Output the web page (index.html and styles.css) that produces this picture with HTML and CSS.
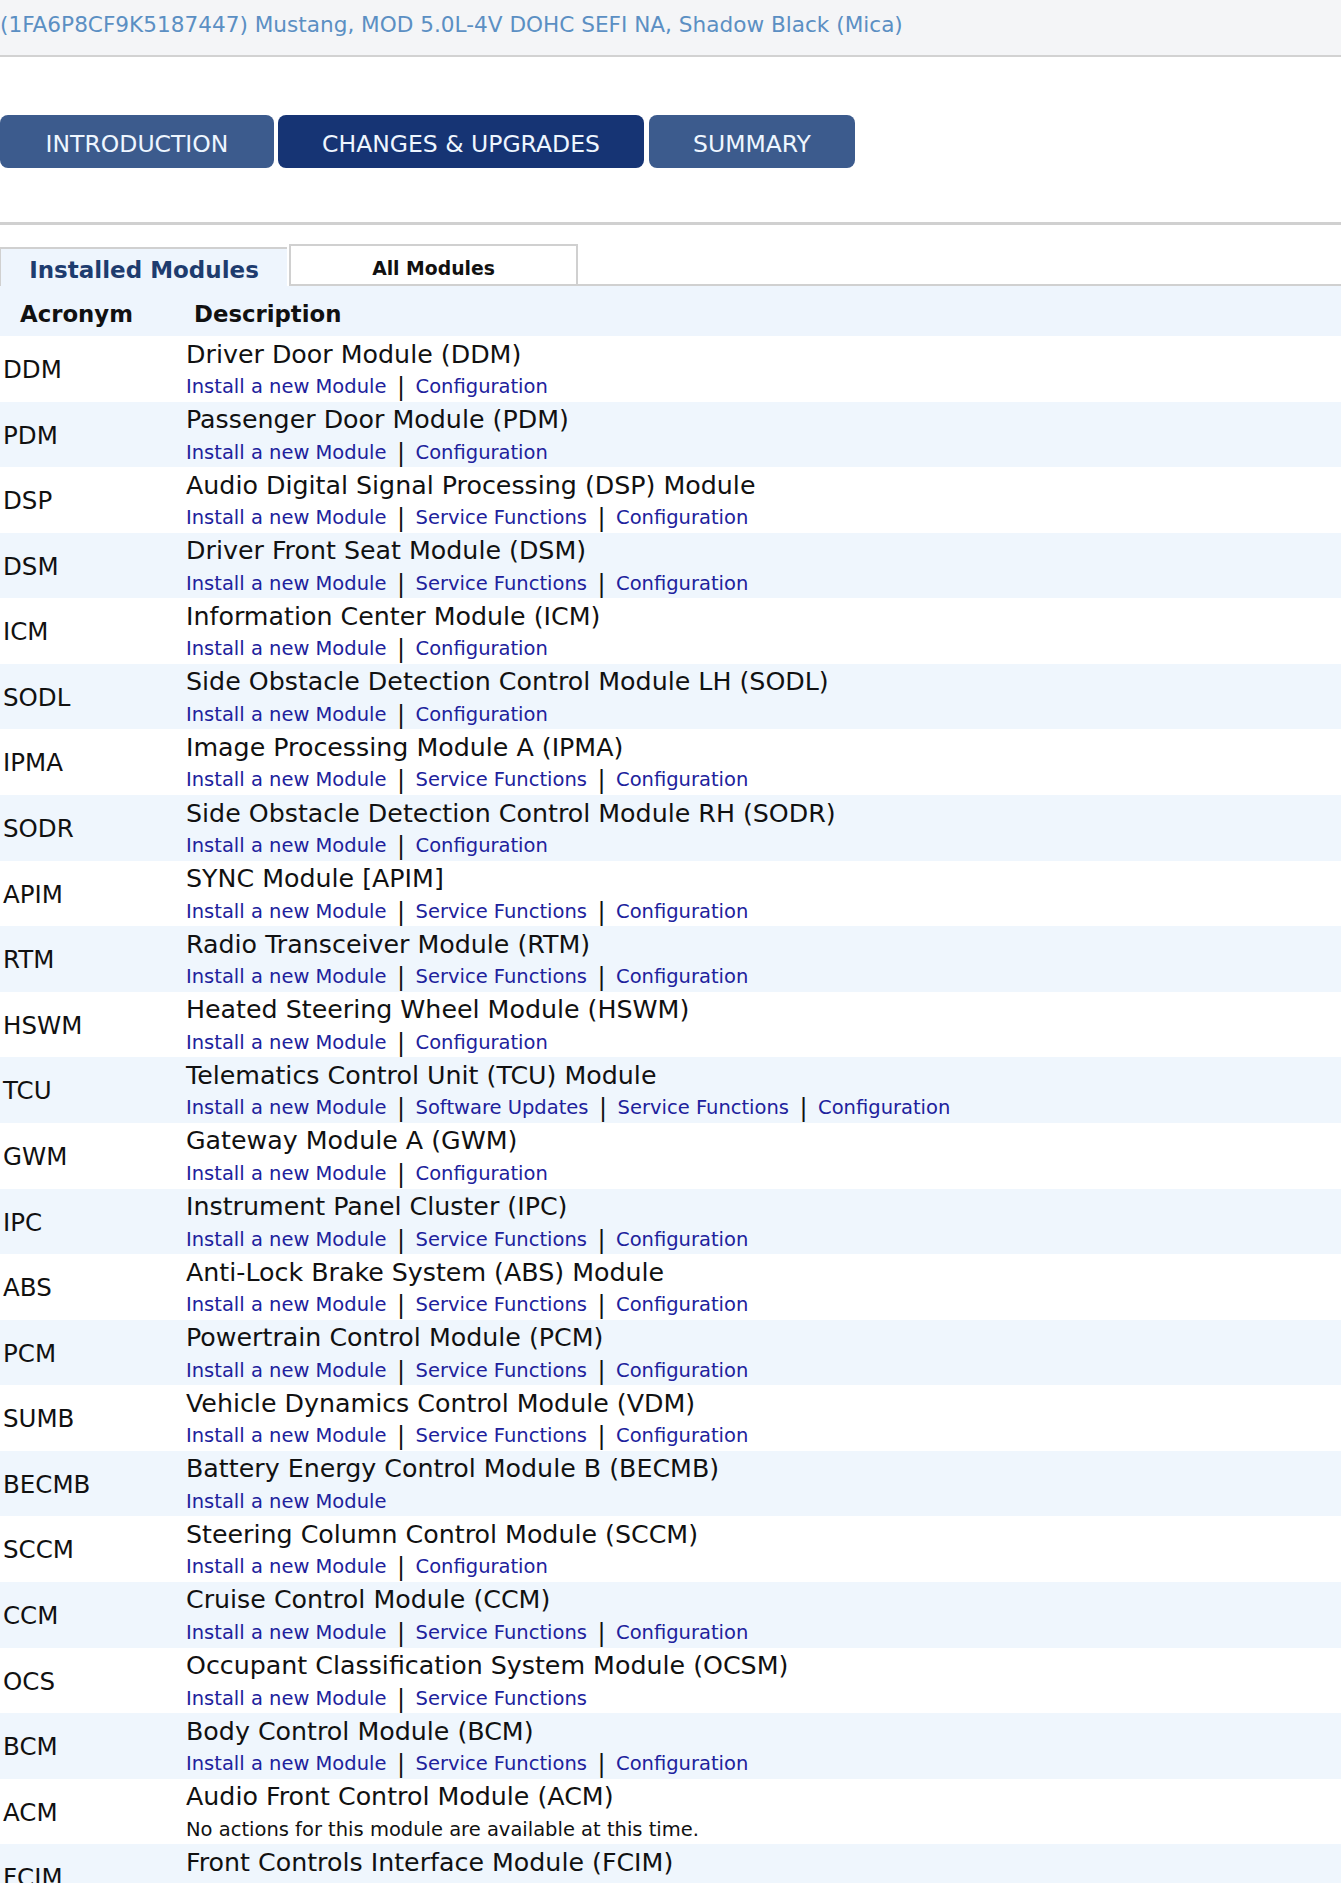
FILE: index.html
```html
<!DOCTYPE html>
<html lang="en">
<head>
<meta charset="utf-8">
<title>Installed Modules</title>
<link rel="stylesheet" href="styles.css">
</head>
<body>
<header class="vehicle-bar">
  <span class="vehicle-id">(1FA6P8CF9K5187447) Mustang, MOD 5.0L-4V DOHC SEFI NA, Shadow Black (Mica)</span>
</header>

<nav class="steps">
  <a class="step step-intro">INTRODUCTION</a>
  <a class="step step-current step-changes">CHANGES &amp; UPGRADES</a>
  <a class="step step-summary">SUMMARY</a>
</nav>

<div class="divider"></div>

<section class="modules">
  <div class="tabs">
    <div class="tab tab-active">Installed Modules</div>
    <div class="tab tab-other">All Modules</div>
    <div class="tab-fill"></div>
  </div>

  <div class="module-head">
    <span class="head-acronym">Acronym</span>
    <span class="head-desc">Description</span>
  </div>

  <div class="module-list">
    <div class="module-row"><div class="acronym">DDM</div><div class="desc"><div class="title">Driver Door Module (DDM)</div><div class="actions"><a>Install a new Module</a><span class="sep">|</span><a>Configuration</a></div></div></div>
    <div class="module-row"><div class="acronym">PDM</div><div class="desc"><div class="title">Passenger Door Module (PDM)</div><div class="actions"><a>Install a new Module</a><span class="sep">|</span><a>Configuration</a></div></div></div>
    <div class="module-row"><div class="acronym">DSP</div><div class="desc"><div class="title">Audio Digital Signal Processing (DSP) Module</div><div class="actions"><a>Install a new Module</a><span class="sep">|</span><a>Service Functions</a><span class="sep">|</span><a>Configuration</a></div></div></div>
    <div class="module-row"><div class="acronym">DSM</div><div class="desc"><div class="title">Driver Front Seat Module (DSM)</div><div class="actions"><a>Install a new Module</a><span class="sep">|</span><a>Service Functions</a><span class="sep">|</span><a>Configuration</a></div></div></div>
    <div class="module-row"><div class="acronym">ICM</div><div class="desc"><div class="title">Information Center Module (ICM)</div><div class="actions"><a>Install a new Module</a><span class="sep">|</span><a>Configuration</a></div></div></div>
    <div class="module-row"><div class="acronym">SODL</div><div class="desc"><div class="title">Side Obstacle Detection Control Module LH (SODL)</div><div class="actions"><a>Install a new Module</a><span class="sep">|</span><a>Configuration</a></div></div></div>
    <div class="module-row"><div class="acronym">IPMA</div><div class="desc"><div class="title">Image Processing Module A (IPMA)</div><div class="actions"><a>Install a new Module</a><span class="sep">|</span><a>Service Functions</a><span class="sep">|</span><a>Configuration</a></div></div></div>
    <div class="module-row"><div class="acronym">SODR</div><div class="desc"><div class="title">Side Obstacle Detection Control Module RH (SODR)</div><div class="actions"><a>Install a new Module</a><span class="sep">|</span><a>Configuration</a></div></div></div>
    <div class="module-row"><div class="acronym">APIM</div><div class="desc"><div class="title">SYNC Module [APIM]</div><div class="actions"><a>Install a new Module</a><span class="sep">|</span><a>Service Functions</a><span class="sep">|</span><a>Configuration</a></div></div></div>
    <div class="module-row"><div class="acronym">RTM</div><div class="desc"><div class="title">Radio Transceiver Module (RTM)</div><div class="actions"><a>Install a new Module</a><span class="sep">|</span><a>Service Functions</a><span class="sep">|</span><a>Configuration</a></div></div></div>
    <div class="module-row"><div class="acronym">HSWM</div><div class="desc"><div class="title">Heated Steering Wheel Module (HSWM)</div><div class="actions"><a>Install a new Module</a><span class="sep">|</span><a>Configuration</a></div></div></div>
    <div class="module-row"><div class="acronym">TCU</div><div class="desc"><div class="title">Telematics Control Unit (TCU) Module</div><div class="actions"><a>Install a new Module</a><span class="sep">|</span><a>Software Updates</a><span class="sep">|</span><a>Service Functions</a><span class="sep">|</span><a>Configuration</a></div></div></div>
    <div class="module-row"><div class="acronym">GWM</div><div class="desc"><div class="title">Gateway Module A (GWM)</div><div class="actions"><a>Install a new Module</a><span class="sep">|</span><a>Configuration</a></div></div></div>
    <div class="module-row"><div class="acronym">IPC</div><div class="desc"><div class="title">Instrument Panel Cluster (IPC)</div><div class="actions"><a>Install a new Module</a><span class="sep">|</span><a>Service Functions</a><span class="sep">|</span><a>Configuration</a></div></div></div>
    <div class="module-row"><div class="acronym">ABS</div><div class="desc"><div class="title">Anti-Lock Brake System (ABS) Module</div><div class="actions"><a>Install a new Module</a><span class="sep">|</span><a>Service Functions</a><span class="sep">|</span><a>Configuration</a></div></div></div>
    <div class="module-row"><div class="acronym">PCM</div><div class="desc"><div class="title">Powertrain Control Module (PCM)</div><div class="actions"><a>Install a new Module</a><span class="sep">|</span><a>Service Functions</a><span class="sep">|</span><a>Configuration</a></div></div></div>
    <div class="module-row"><div class="acronym">SUMB</div><div class="desc"><div class="title">Vehicle Dynamics Control Module (VDM)</div><div class="actions"><a>Install a new Module</a><span class="sep">|</span><a>Service Functions</a><span class="sep">|</span><a>Configuration</a></div></div></div>
    <div class="module-row"><div class="acronym">BECMB</div><div class="desc"><div class="title">Battery Energy Control Module B (BECMB)</div><div class="actions"><a>Install a new Module</a></div></div></div>
    <div class="module-row"><div class="acronym">SCCM</div><div class="desc"><div class="title">Steering Column Control Module (SCCM)</div><div class="actions"><a>Install a new Module</a><span class="sep">|</span><a>Configuration</a></div></div></div>
    <div class="module-row"><div class="acronym">CCM</div><div class="desc"><div class="title">Cruise Control Module (CCM)</div><div class="actions"><a>Install a new Module</a><span class="sep">|</span><a>Service Functions</a><span class="sep">|</span><a>Configuration</a></div></div></div>
    <div class="module-row"><div class="acronym">OCS</div><div class="desc"><div class="title">Occupant Classification System Module (OCSM)</div><div class="actions"><a>Install a new Module</a><span class="sep">|</span><a>Service Functions</a></div></div></div>
    <div class="module-row"><div class="acronym">BCM</div><div class="desc"><div class="title">Body Control Module (BCM)</div><div class="actions"><a>Install a new Module</a><span class="sep">|</span><a>Service Functions</a><span class="sep">|</span><a>Configuration</a></div></div></div>
    <div class="module-row"><div class="acronym">ACM</div><div class="desc"><div class="title">Audio Front Control Module (ACM)</div><div class="actions note">No actions for this module are available at this time.</div></div></div>
    <div class="module-row"><div class="acronym">FCIM</div><div class="desc"><div class="title">Front Controls Interface Module (FCIM)</div><div class="actions"><a>Install a new Module</a><span class="sep">|</span><a>Configuration</a></div></div></div>
  </div>
</section>
</body>
</html>
```

FILE: styles.css
```css
* {
  box-sizing: border-box;
}

body {
  margin: 0;
  background: #ffffff;
  font-family: "DejaVu Sans", Verdana, sans-serif;
  color: #111111;
}

/* vehicle summary strip */
.vehicle-bar {
  height: 57px;
  background: #f4f5f7;
  border-bottom: 2px solid #d2d2d2;
  display: flex;
  align-items: center;
  padding-bottom: 6px;
}

.vehicle-id {
  font-size: 21.6px;
  color: #5b8fc3;
  white-space: nowrap;
}

/* wizard step buttons */
.steps {
  display: flex;
  gap: 4px;
  margin-top: 58px;
}

.step {
  height: 53px;
  border-radius: 8px;
  display: flex;
  align-items: center;
  justify-content: center;
  color: #eef6ff;
  font-size: 23.5px;
  background: #3c5b8d;
  padding-top: 4px;
  cursor: pointer;
}

.step-intro { width: 274px; }
.step-changes { width: 366px; }
.step-summary { width: 206px; margin-left: 1px; }

.step-current {
  background: #163474;
}

.divider {
  height: 3px;
  background: #d0d0d0;
  margin-top: 54px;
}

/* module tabs */
.tabs {
  display: flex;
  align-items: flex-end;
  margin-top: 19px;
  height: 42px;
}

.tab {
  display: flex;
  align-items: center;
  justify-content: center;
  font-weight: bold;
}

.tab-active {
  width: 287px;
  height: 39px;
  background: #eef5fd;
  border-top: 2px solid #d0d0d0;
  border-left: 1px solid #d0d0d0;
  color: #1e3c6f;
  font-size: 23px;
  padding-top: 4px;
}

.tab-other {
  width: 289px;
  height: 42px;
  margin-left: 2px;
  background: #ffffff;
  border: 2px solid #d0d0d0;
  font-size: 18.8px;
  padding-top: 6px;
  color: #111111;
}

.tab-fill {
  flex: 1;
  border-bottom: 2px solid #d0d0d0;
}

/* table header */
.module-head {
  display: flex;
  align-items: center;
  height: 50px;
  background: #eef5fd;
  font-weight: bold;
  font-size: 22.8px;
  padding-top: 5px;
}

.head-acronym {
  width: 194px;
  padding-left: 20px;
}

/* module rows */
.module-row {
  display: grid;
  grid-template-columns: 186px 1fr;
  align-items: center;
  height: 65.58px;
  background: #ffffff;
}

.module-row:nth-child(even) {
  background: #eff6fd;
}

.acronym {
  font-size: 24.5px;
  padding-left: 3px;
  padding-top: 1px;
}

.desc {
  align-self: start;
  padding-top: 3.5px;
}

.title {
  font-size: 25.3px;
  line-height: 30px;
  white-space: nowrap;
}

.actions {
  margin-top: 2.5px;
  font-size: 19.5px;
  line-height: 30px;
  display: flex;
  align-items: center;
  white-space: nowrap;
}

.actions a {
  color: #20219c;
  cursor: pointer;
}

.sep {
  font-size: 24px;
  color: #111111;
  margin: 0 10.5px;
  line-height: 30px;
}

.actions.note {
  color: #111111;
}
```
